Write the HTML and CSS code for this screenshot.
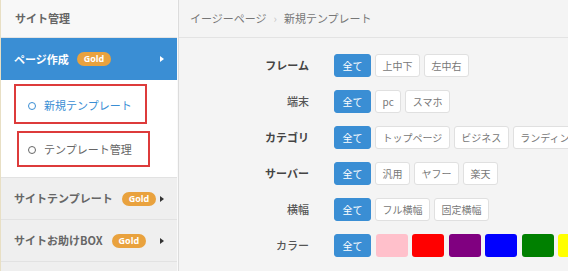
FILE: index.html
```html
<!DOCTYPE html>
<html lang="ja">
<head>
<meta charset="utf-8">
<title>新規テンプレート</title>
<link rel="stylesheet" href="styles.css">
</head>
<body>
<div class="app">
  <aside class="sidebar">
    <div class="side-title">サイト管理</div>
    <div class="side-row side-row--active">
      <span class="side-label">ページ作成</span>
      <span class="badge">Gold</span>
      <span class="arrow arrow--white"></span>
    </div>
    <div class="submenu">
      <div class="sub-item sub-item--current sub-item--first"><span class="ring"></span>新規テンプレート</div>
      <div class="sub-item sub-item--second"><span class="ring"></span>テンプレート管理</div>
    </div>
    <div class="side-row">
      <span class="side-label">サイトテンプレート</span>
      <span class="badge">Gold</span>
      <span class="arrow"></span>
    </div>
    <div class="side-row">
      <span class="side-label">サイトお助けBOX</span>
      <span class="badge">Gold</span>
      <span class="arrow"></span>
    </div>
    <div class="side-row"></div>
  </aside>
  <main class="main">
    <div class="crumbs"><span>イージーページ</span><span class="crumb-sep">›</span><span>新規テンプレート</span></div>
    <div class="filters">
      <div class="frow">
        <div class="flabel">フレーム</div>
        <div class="opts">
          <span class="btn btn--on">全て</span><span class="btn">上中下</span><span class="btn">左中右</span>
        </div>
      </div>
      <div class="frow">
        <div class="flabel flabel--light">端末</div>
        <div class="opts">
          <span class="btn btn--on">全て</span><span class="btn">pc</span><span class="btn">スマホ</span>
        </div>
      </div>
      <div class="frow">
        <div class="flabel">カテゴリ</div>
        <div class="opts">
          <span class="btn btn--on">全て</span><span class="btn">トップページ</span><span class="btn">ビジネス</span><span class="btn">ランディングページ</span>
        </div>
      </div>
      <div class="frow">
        <div class="flabel">サーバー</div>
        <div class="opts">
          <span class="btn btn--on">全て</span><span class="btn">汎用</span><span class="btn">ヤフー</span><span class="btn">楽天</span>
        </div>
      </div>
      <div class="frow">
        <div class="flabel flabel--light">横幅</div>
        <div class="opts">
          <span class="btn btn--on">全て</span><span class="btn">フル横幅</span><span class="btn">固定横幅</span>
        </div>
      </div>
      <div class="frow">
        <div class="flabel flabel--light">カラー</div>
        <div class="opts opts--colors">
          <span class="btn btn--on">全て</span>
          <span class="swatch" style="background:#ffc0cb"></span>
          <span class="swatch" style="background:#ff0000"></span>
          <span class="swatch" style="background:#800080"></span>
          <span class="swatch" style="background:#0000ff"></span>
          <span class="swatch" style="background:#008000"></span>
          <span class="swatch" style="background:#ffff00"></span>
        </div>
      </div>
    </div>
  </main>
</div>
</body>
</html>
```

FILE: styles.css
```css
html, body {
  margin: 0;
  padding: 0;
}
body {
  width: 568px;
  height: 271px;
  overflow: hidden;
  font-family: "Noto Sans CJK JP", "Noto Sans", sans-serif;
  background: #f4f4f4;
}
.app {
  display: flex;
  height: 271px;
  border-left: 1px solid #e8dfc4;
}
.sidebar {
  width: 176px;
  flex: none;
  background: #efefef;
  border-right: 1px solid #fafafa;
  display: flex;
  flex-direction: column;
  overflow: hidden;
}
.side-title {
  flex: none;
  height: 37px;
  border-bottom: 1px solid #e4e4e4;
  background: #f8f8f8;
  display: flex;
  align-items: center;
  padding-left: 14px;
  font-size: 11px;
  font-weight: bold;
  color: #666;
  line-height: 1;
  white-space: nowrap;
}
.side-row {
  height: 41px;
  flex: none;
  border-bottom: 1px solid #e2e2e2;
  display: flex;
  align-items: center;
  padding: 0 13px;
  font-size: 11px;
  font-weight: bold;
  color: #666;
  line-height: 1;
  white-space: nowrap;
}
.side-row--active {
  height: 42px;
  background: #3a8ed4;
  color: #fff;
  border-bottom: none;
}
.badge {
  margin-left: 9px;
  height: 14px;
  padding: 0 7px;
  border-radius: 7px;
  background: #e9a23e;
  color: #fff;
  font-family: "Open Sans", "Noto Sans", sans-serif;
  font-size: 9px;
  font-weight: bold;
  line-height: 14px;
}
.side-row--active .badge {
  margin-left: 8px;
}
.arrow {
  margin-left: auto;
  width: 0;
  height: 0;
  border-left: 4px solid #333;
  border-top: 3px solid transparent;
  border-bottom: 3px solid transparent;
}
.arrow--white {
  border-left-color: #fff;
}
.submenu {
  flex: none;
  background: #fff;
  padding: 4px 0 10px;
  border-bottom: 1px solid #e2e2e2;
  display: flex;
  flex-direction: column;
  gap: 7px;
}
.sub-item {
  flex: none;
  display: flex;
  align-items: center;
  border: 2px solid #dd3b3b;
  font-size: 11px;
  color: #666;
  line-height: 1;
  white-space: nowrap;
}
.sub-item--first {
  margin-left: 13px;
  height: 33px;
  padding: 3px 0 0 12px;
  width: 117px;
}
.sub-item--second {
  margin-left: 16px;
  height: 31px;
  padding: 1px 0 0 9px;
  width: 120px;
}
.sub-item--current {
  color: #3a8ed4;
}
.ring {
  width: 6px;
  height: 6px;
  border: 1.5px solid currentColor;
  border-radius: 50%;
  margin-right: 8px;
}
.main {
  flex: 1;
  border-left: 1px solid #dcdcdc;
  background: #f4f4f4;
  min-width: 0;
  overflow: hidden;
}
.crumbs {
  height: 37px;
  border-bottom: 1px solid #e3e3e3;
  display: flex;
  align-items: center;
  padding-left: 11px;
  font-size: 11px;
  color: #777;
  line-height: 1;
  white-space: nowrap;
}
.crumb-sep {
  color: #c4c4c4;
  margin: 0 7px;
}
.filters {
  padding-top: 16px;
  display: flex;
  flex-direction: column;
  gap: 13px;
}
.frow {
  display: flex;
  align-items: center;
  height: 23px;
}
.flabel {
  width: 130px;
  flex: none;
  text-align: right;
  margin-right: 25px;
  font-size: 11px;
  font-weight: bold;
  color: #444;
  line-height: 1;
}
.flabel--light {
  font-weight: 500;
  color: #555;
}
.opts {
  display: flex;
  gap: 4px;
  white-space: nowrap;
  flex-wrap: nowrap;
}
.opts--colors {
  gap: 4.5px;
}
.btn {
  height: 21px;
  padding: 0 6.5px;
  border: 1px solid #e0e0e0;
  border-radius: 3px;
  background: #fff;
  color: #777;
  font-size: 10px;
  line-height: 21px;
  flex: none;
}
.btn--on {
  background: #3a8ed4;
  border-color: #3a8ed4;
  color: #fff;
  padding: 0 7.5px;
}
.swatch {
  width: 32px;
  height: 23px;
  border-radius: 3px;
  flex: none;
}
```
